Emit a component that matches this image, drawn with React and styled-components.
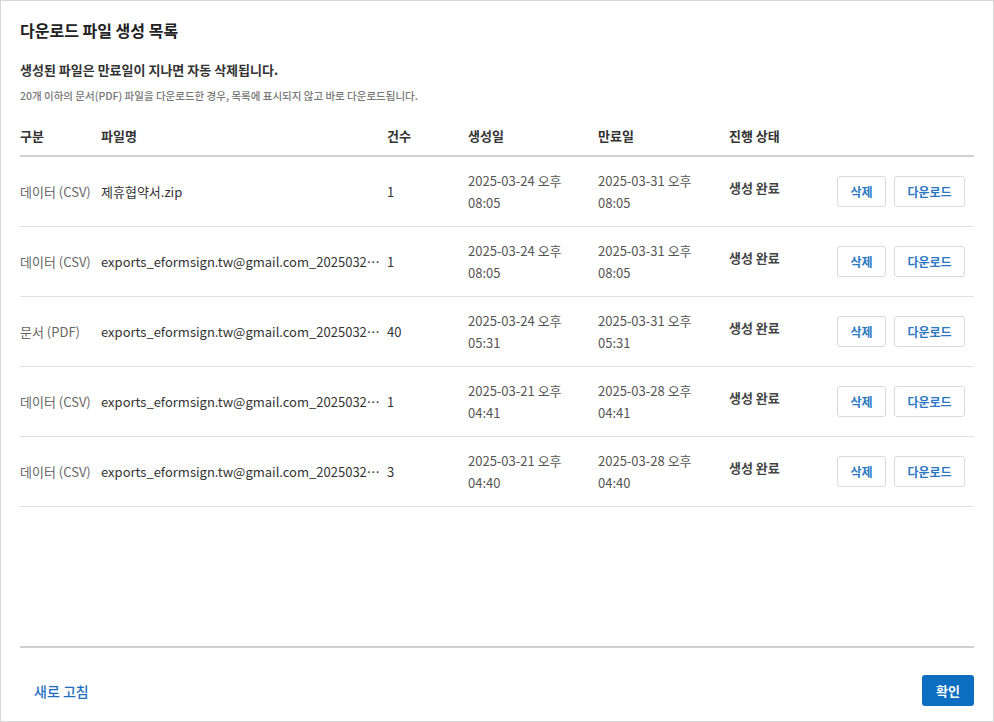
import React from 'react';
import styled, { createGlobalStyle } from 'styled-components';

const GlobalStyle = createGlobalStyle`
    html, body {
        margin: 0;
        padding: 0;
        background: #fff;
    }
    body {
        font-family: "Noto Sans CJK KR", "Noto Sans", sans-serif;
        color: #333;
    }
    * {
        box-sizing: border-box;
    }
`;

const Dialog = styled.div`
    display: flex;
    flex-direction: column;
    width: 994px;
    height: 722px;
    border: 1px solid #d6d6d6;
    padding: 17px 19px 0 19px;
`;

const Title = styled.h2`
    margin: 0;
    font-size: 16px;
    line-height: 24px;
    font-weight: 700;
    color: #222;
`;

const Notice = styled.p`
    margin: 18px 0 0;
    font-size: 13px;
    line-height: 20px;
    font-weight: 700;
    color: #333;
`;

const SubNotice = styled.p`
    margin: 8px 0 0;
    font-size: 10.5px;
    line-height: 16px;
    font-weight: 500;
    color: #777;
`;

const TableArea = styled.div`
    flex: 1;
    margin-top: 13px;
`;

const cols = '81px 286px 81px 130px 131px 100px 1fr';

const HeaderRow = styled.div`
    display: grid;
    grid-template-columns: ${cols};
    height: 40px;
    align-items: center;
    border-bottom: 2px solid #d2d2d2;
    padding-bottom: 2px;
`;

const HeadCell = styled.div`
    font-size: 13px;
    font-weight: 700;
    color: #333;
`;

const Row = styled.div`
    display: grid;
    grid-template-columns: ${cols};
    height: 70px;
    align-items: center;
    border-bottom: 1px solid #e0e0e0;
`;

const Cell = styled.div`
    font-size: 13px;
    line-height: 22px;
    color: ${(p) => p.$color || '#333'};
    font-weight: ${(p) => (p.$bold ? 700 : 400)};
    white-space: ${(p) => (p.$wrap ? 'normal' : 'nowrap')};
    overflow: hidden;
    text-overflow: ellipsis;
    padding-right: ${(p) => p.$pr || 0}px;
    margin-top: ${(p) => p.$mt || 0}px;
`;

const Actions = styled.div`
    display: flex;
    justify-content: flex-end;
    gap: 8px;
    padding-right: 9px;
`;

const SmallButton = styled.button`
    height: 31px;
    width: ${(p) => p.$w}px;
    padding: 0;
    background: #fff;
    border: 1px solid #d9d9d9;
    border-radius: 3px;
    font-family: inherit;
    font-size: 12px;
    font-weight: 700;
    color: #2b78c2;
    cursor: pointer;
`;

const Footer = styled.div`
    border-top: 2px solid #cfcfcf;
    height: 75px;
    display: flex;
    align-items: center;
    justify-content: space-between;
    padding: 12px 0 0 14px;
`;

const TextButton = styled.button`
    background: none;
    border: none;
    padding: 0;
    font-family: inherit;
    font-size: 14px;
    font-weight: 500;
    color: #1f6fbf;
    cursor: pointer;
`;

const PrimaryButton = styled.button`
    width: 52px;
    height: 31px;
    background: #0b6ec1;
    border: none;
    border-radius: 3px;
    font-family: inherit;
    font-size: 13px;
    font-weight: 700;
    color: #fff;
    cursor: pointer;
`;

const email = 'exports_eformsign.tw@gmail.com_20250324';

const rows = [
    { type: '데이터 (CSV)', name: '제휴협약서.zip', count: '1', created: ['2025-03-24 오후', '08:05'], expires: ['2025-03-31 오후', '08:05'] },
    { type: '데이터 (CSV)', name: email + '_2005.zip', count: '1', created: ['2025-03-24 오후', '08:05'], expires: ['2025-03-31 오후', '08:05'] },
    { type: '문서 (PDF)', name: email + '_1731.zip', count: '40', created: ['2025-03-24 오후', '05:31'], expires: ['2025-03-31 오후', '05:31'] },
    { type: '데이터 (CSV)', name: email + '_1641.zip', count: '1', created: ['2025-03-21 오후', '04:41'], expires: ['2025-03-28 오후', '04:41'] },
    { type: '데이터 (CSV)', name: email + '_1640.zip', count: '3', created: ['2025-03-21 오후', '04:40'], expires: ['2025-03-28 오후', '04:40'] },
];

const App = () => {
    return (
        <>
            <GlobalStyle />
            <Dialog>
                <Title>다운로드 파일 생성 목록</Title>
                <Notice>생성된 파일은 만료일이 지나면 자동 삭제됩니다.</Notice>
                <SubNotice>20개 이하의 문서(PDF) 파일을 다운로드한 경우, 목록에 표시되지 않고 바로 다운로드됩니다.</SubNotice>

                <TableArea>
                    <HeaderRow>
                        <HeadCell>구분</HeadCell>
                        <HeadCell>파일명</HeadCell>
                        <HeadCell>건수</HeadCell>
                        <HeadCell>생성일</HeadCell>
                        <HeadCell>만료일</HeadCell>
                        <HeadCell>진행 상태</HeadCell>
                        <HeadCell />
                    </HeaderRow>
                    {rows.map((r, i) => (
                        <Row key={i}>
                            <Cell $color="#666">{r.type}</Cell>
                            <Cell $pr={3}>{r.name}</Cell>
                            <Cell>{r.count}</Cell>
                            <Cell $wrap $color="#555">
                                {r.created[0]}
                                <br />
                                {r.created[1]}
                            </Cell>
                            <Cell $wrap $color="#555">
                                {r.expires[0]}
                                <br />
                                {r.expires[1]}
                            </Cell>
                            <Cell $bold $color="#444" $mt={-8}>생성 완료</Cell>
                            <Actions>
                                <SmallButton $w={49}>삭제</SmallButton>
                                <SmallButton $w={71}>다운로드</SmallButton>
                            </Actions>
                        </Row>
                    ))}
                </TableArea>

                <Footer>
                    <TextButton>새로 고침</TextButton>
                    <PrimaryButton>확인</PrimaryButton>
                </Footer>
            </Dialog>
        </>
    );
};

export default App;
